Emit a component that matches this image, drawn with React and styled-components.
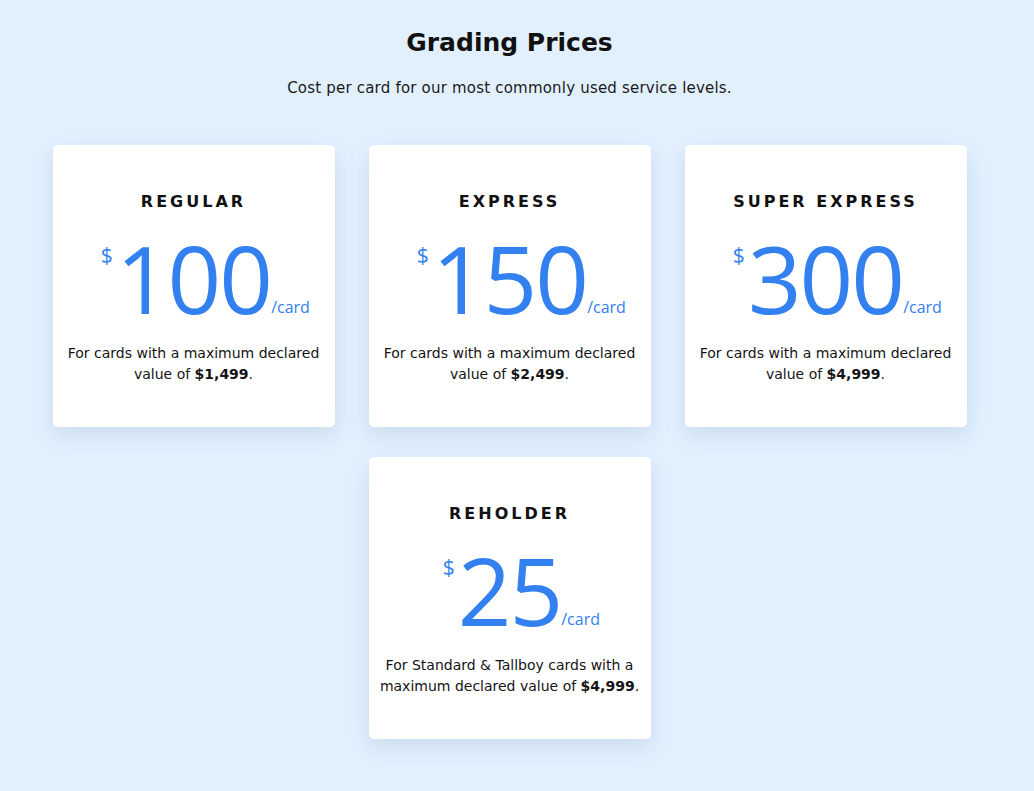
import styled, { createGlobalStyle } from "styled-components";

const GlobalStyle = createGlobalStyle`
  html, body {
    margin: 0;
    padding: 0;
    background: #e2f0fe;
  }
  body {
    font-family: "DejaVu Sans", "Open Sans", sans-serif;
    color: #141414;
  }
`;

const Page = styled.section`
  width: 1019px;
  min-height: 791px;
  padding-top: 24px;
  box-sizing: border-box;
  display: flex;
  flex-direction: column;
  align-items: center;
`;

const Heading = styled.h2`
  margin: 0;
  font-size: 25px;
  font-weight: 700;
  line-height: 38px;
  color: #111;
`;

const Subtitle = styled.p`
  margin: 14px 0 0;
  font-size: 15px;
  letter-spacing: 0.2px;
  line-height: 24px;
  color: #1a1a1a;
`;

const Grid = styled.div`
  margin-top: 45px;
  display: grid;
  grid-template-columns: repeat(3, 282px);
  column-gap: 34px;
  row-gap: 30px;
`;

const Card = styled.div`
  grid-column: ${(p) => p.$col || "auto"};
  height: 282px;
  box-sizing: border-box;
  padding: 45px 10px 0;
  background: #fff;
  border-radius: 5px;
  box-shadow: 0 8px 22px rgba(30, 70, 130, 0.12);
  display: flex;
  flex-direction: column;
  align-items: center;
`;

const Level = styled.h3`
  margin: 0;
  font-size: 16px;
  font-weight: 700;
  letter-spacing: 3px;
  line-height: 24px;
  color: #111;
`;

const PriceRow = styled.div`
  align-self: stretch;
  margin-top: 17px;
  display: grid;
  grid-template-columns: 1fr auto 1fr;
  align-items: baseline;
  color: #3380f0;
  font-family: "Open Sans", sans-serif;
`;

const Dollar = styled.span`
  justify-self: end;
  align-self: start;
  margin-top: 14px;
  margin-right: 3px;
  font-size: 21px;
  line-height: 1;
`;

const Amount = styled.span`
  font-size: 94px;
  font-weight: 400;
  line-height: 1;
  letter-spacing: -2px;
`;

const PerCard = styled.span`
  justify-self: start;
  align-self: end;
  margin-bottom: 10px;
  font-size: 16px;
  line-height: 1;
`;

const Note = styled.p`
  margin: 18px 0 0;
  font-size: 14px;
  line-height: 21px;
  text-align: center;
  color: #141414;
`;

const Max = styled.strong`
  font-weight: 700;
`;

const prices = [
  { level: "REGULAR", amount: "100", note: "For cards with a maximum declared value of", max: "$1,499" },
  { level: "EXPRESS", amount: "150", note: "For cards with a maximum declared value of", max: "$2,499" },
  { level: "SUPER EXPRESS", amount: "300", note: "For cards with a maximum declared value of", max: "$4,999" },
  { level: "REHOLDER", amount: "25", note: "For Standard & Tallboy cards with a maximum declared value of", max: "$4,999", col: "2" },
];

export default function App() {
  return (
    <>
      <GlobalStyle />
      <Page>
        <Heading>Grading Prices</Heading>
        <Subtitle>Cost per card for our most commonly used service levels.</Subtitle>
        <Grid>
          {prices.map((p) => (
            <Card key={p.level} $col={p.col}>
              <Level>{p.level}</Level>
              <PriceRow>
                <Dollar>$</Dollar>
                <Amount>{p.amount}</Amount>
                <PerCard>/card</PerCard>
              </PriceRow>
              <Note>
                {p.note} <Max>{p.max}</Max>.
              </Note>
            </Card>
          ))}
        </Grid>
      </Page>
    </>
  );
}
